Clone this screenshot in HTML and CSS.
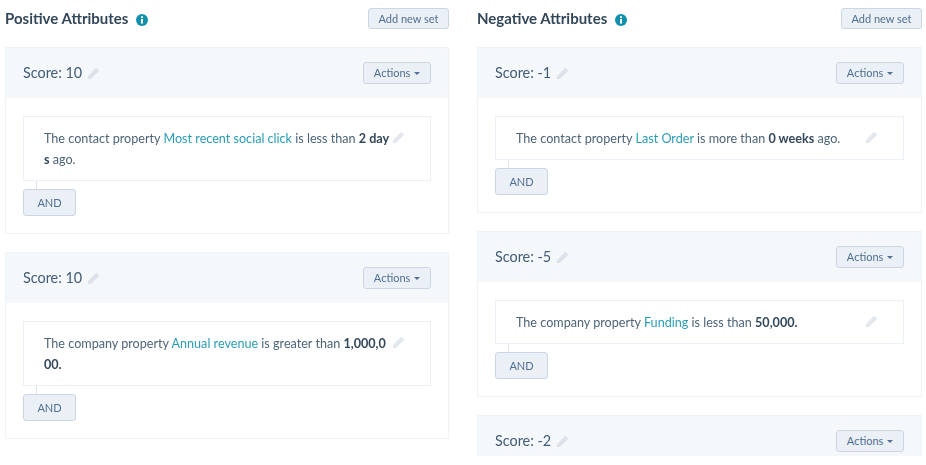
FILE: index.html
```html
<!DOCTYPE html>
<html lang="en">
<head>
    <meta charset="UTF-8">
    <title>Score Attributes</title>
    <link rel="stylesheet" href="styles.css">
</head>

<body>
<svg class="defs" width="0" height="0">
    <symbol id="pencil" viewBox="0 0 14 14">
        <path d="M10 .8l3.2 3.2-8.7 8.7L.8 13.2l.5-3.7z" fill="currentColor"/>
    </symbol>
</svg>

<div class="page">
    <div class="column">
        <div class="head">
            <h2>Positive Attributes</h2>
            <svg class="info" viewBox="0 0 12 12"><circle cx="6" cy="6" r="6" fill="#0f91ae"/><circle cx="6" cy="3.2" r="1.1" fill="#fff"/><rect x="5" y="5" width="2" height="4.6" fill="#fff"/></svg>
            <button class="btn add">Add new set</button>
        </div>

        <div class="card">
            <div class="card-head">
                <span class="score">Score: 10</span>
                <svg class="pencil score-pencil"><use href="#pencil"/></svg>
                <button class="btn actions">Actions <i class="caret"></i></button>
            </div>
            <div class="card-body">
                <div class="rule">
                    <p>The contact property <a href="#">Most recent social click</a> is less than <b>2 days</b> ago.</p>
                    <svg class="pencil"><use href="#pencil"/></svg>
                </div>
                <div class="link-line"></div>
                <button class="btn and">AND</button>
            </div>
        </div>

        <div class="card">
            <div class="card-head">
                <span class="score">Score: 10</span>
                <svg class="pencil score-pencil"><use href="#pencil"/></svg>
                <button class="btn actions">Actions <i class="caret"></i></button>
            </div>
            <div class="card-body">
                <div class="rule">
                    <p>The company property <a href="#">Annual revenue</a> is greater than <b>1,000,000.</b></p>
                    <svg class="pencil"><use href="#pencil"/></svg>
                </div>
                <div class="link-line"></div>
                <button class="btn and">AND</button>
            </div>
        </div>
    </div>

    <div class="column">
        <div class="head">
            <h2>Negative Attributes</h2>
            <svg class="info" viewBox="0 0 12 12"><circle cx="6" cy="6" r="6" fill="#0f91ae"/><circle cx="6" cy="3.2" r="1.1" fill="#fff"/><rect x="5" y="5" width="2" height="4.6" fill="#fff"/></svg>
            <button class="btn add">Add new set</button>
        </div>

        <div class="card">
            <div class="card-head">
                <span class="score">Score: -1</span>
                <svg class="pencil score-pencil"><use href="#pencil"/></svg>
                <button class="btn actions">Actions <i class="caret"></i></button>
            </div>
            <div class="card-body">
                <div class="rule">
                    <p>The contact property <a href="#">Last Order</a> is more than <b>0 weeks</b> ago.</p>
                    <svg class="pencil"><use href="#pencil"/></svg>
                </div>
                <div class="link-line"></div>
                <button class="btn and">AND</button>
            </div>
        </div>

        <div class="card">
            <div class="card-head">
                <span class="score">Score: -5</span>
                <svg class="pencil score-pencil"><use href="#pencil"/></svg>
                <button class="btn actions">Actions <i class="caret"></i></button>
            </div>
            <div class="card-body">
                <div class="rule">
                    <p>The company property <a href="#">Funding</a> is less than <b>50,000.</b></p>
                    <svg class="pencil"><use href="#pencil"/></svg>
                </div>
                <div class="link-line"></div>
                <button class="btn and">AND</button>
            </div>
        </div>

        <div class="card">
            <div class="card-head">
                <span class="score">Score: -2</span>
                <svg class="pencil score-pencil"><use href="#pencil"/></svg>
                <button class="btn actions">Actions <i class="caret"></i></button>
            </div>
        </div>
    </div>
</div>
</body>
</html>
```

FILE: styles.css
```css
html, body {
    margin: 0;
    padding: 0;
    background-color: #ffffff;
}
body {
    font-family: Lato, "Open Sans", sans-serif;
    color: #33475b;
    overflow: hidden;
}
.defs {
    position: absolute;
}
.page {
    display: flex;
    gap: 28px;
    height: 456px;
    padding-left: 5px;
    overflow: hidden;
    filter: blur(0.4px);
}
.column {
    width: 444px;
    flex: none;
}
.column + .column {
    width: 445px;
}
.head {
    display: flex;
    align-items: center;
    height: 21px;
    margin-top: 8px;
    margin-bottom: 18px;
}
.head h2 {
    margin: 0 0 2px;
    font-size: 15px;
    font-weight: 700;
    color: #33475b;
}
.info {
    width: 12px;
    height: 12px;
    margin-left: 8px;
    margin-top: 2px;
}
.btn {
    font-family: inherit;
    font-size: 11px;
    color: #516f90;
    background-color: #eaf0f6;
    border: 1px solid #cbd6e2;
    border-radius: 3px;
    padding: 0;
}
.add {
    margin-left: auto;
    width: 81px;
    height: 21px;
}
.card {
    border: 1px solid #eef3f8;
    margin-bottom: 18px;
}
.card-head {
    display: flex;
    align-items: center;
    height: 50px;
    padding: 0 17px;
    background-color: #f5f8fa;
}
.score {
    font-size: 14.4px;
    color: #425b76;
    margin-bottom: 2px;
}
.pencil {
    width: 13px;
    height: 13px;
    flex: none;
    color: #e3e8ef;
}
.score-pencil {
    margin-left: 5px;
    color: #dbe2ea;
}
.actions {
    margin-left: auto;
    width: 68px;
    height: 22px;
    margin-bottom: 1px;
}
.caret {
    display: inline-block;
    margin-left: 1px;
    vertical-align: 2px;
    border-top: 3px solid #516f90;
    border-left: 3px solid transparent;
    border-right: 3px solid transparent;
}
.card-body {
    padding: 18px 17px 17px;
}
.rule {
    display: flex;
    align-items: flex-start;
    padding: 11px 25px 10px 20px;
    border: 1px solid #eaf0f6;
}
.rule p {
    flex: 1;
    margin: 0;
    font-size: 12.6px;
    line-height: 21px;
    color: #4d6478;
    word-break: break-all;
    padding-right: 2px;
}
.rule a {
    color: #2a9db5;
    text-decoration: none;
}
.rule b {
    color: #33475b;
}
.rule .pencil {
    margin-top: 3px;
}
.link-line {
    width: 1px;
    height: 8px;
    margin-left: 13px;
    background-color: #dfe3eb;
}
.and {
    display: block;
    width: 53px;
    height: 27px;
    font-size: 11px;
}
```
